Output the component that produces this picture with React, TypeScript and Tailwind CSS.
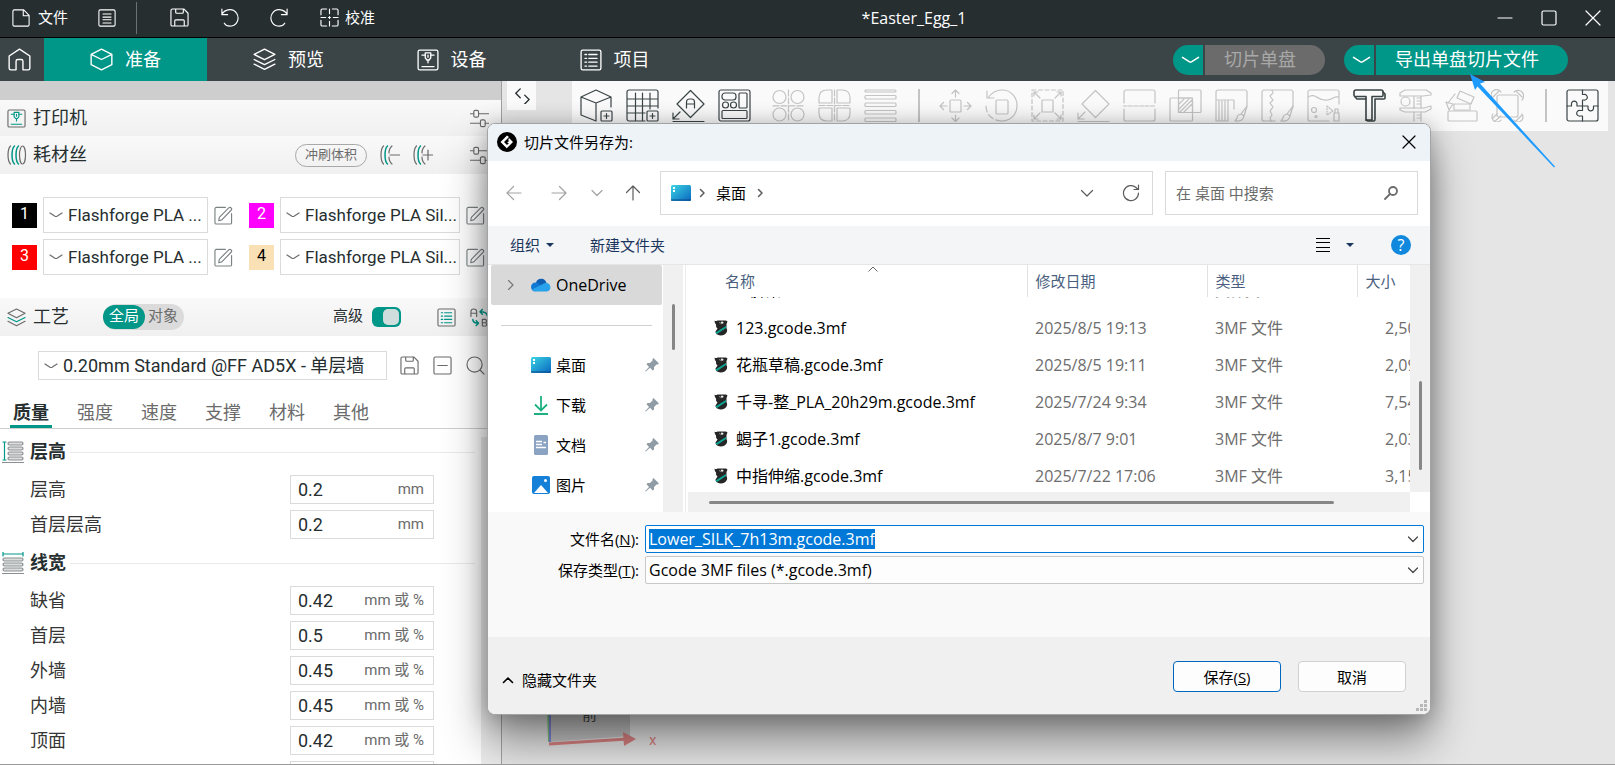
import { useEffect, useRef, useState, type ReactNode } from 'react';

type IconProps = { children: ReactNode; size?: number; box?: number; className?: string };

function Icon({ children, size = 19, box = 20, className = '' }: IconProps) {
  return (
    <svg
      width={size}
      height={size}
      viewBox={`0 0 ${box} ${box}`}
      fill="none"
      stroke="currentColor"
      strokeWidth={1.2}
      strokeLinecap="round"
      strokeLinejoin="round"
      className={`shrink-0 ${className}`}
      aria-hidden="true"
    >
      {children}
    </svg>
  );
}

const DownMark = ({ className = '' }: { className?: string }) => (
  <svg width="14" height="6" viewBox="0 0 14 6" fill="none" stroke="currentColor" strokeWidth="1.2" strokeLinecap="round" className={`shrink-0 ${className}`} aria-hidden="true">
    <path d="M1 1l5 3.2q1 .6 2 0l5-3.2" />
  </svg>
);

const SaveIcon = ({ className = '' }: { className?: string }) => (
  <Icon className={className}>
    <path d="M2.500 1h12L19 5.500V17.500a1.500 1.500 0 0 1-1.500 1.500h-15A1.500 1.500 0 0 1 1 17.500v-15A1.500 1.500 0 0 1 2.500 1zM6 1v3.500a1 1 0 0 0 1 1h6a1 1 0 0 0 1-1V1M5 19v-5.500a1 1 0 0 1 1-1h8a1 1 0 0 1 1 1V19" />
  </Icon>
);

const PrinterIcon = ({ size, accent = '' }: { size?: number; accent?: string }) => (
  <Icon size={size}>
    <rect x="1" y="1" width="18" height="18" rx="1.5" />
    <g className={accent}>
      <path d="M4.500 5.500h3M12.500 5.500h3M4.500 16h11" />
      <path d="M7.500 3.500h5v4.500l-1.500 2h-2l-1.500-2zM10 5.500v2M10 10v2.500" />
    </g>
  </Icon>
);

const LayersIcon = ({ size, accent = '' }: { size?: number; accent?: string }) => (
  <Icon size={size}>
    <path d="M10 1l9 4.600-9 4.600-9-4.600z" />
    <path className={accent} d="M1 10l9 4.500 9-4.500" />
    <path d="M1 14l9 4.600 9-4.600" />
  </Icon>
);

const SlidersIcon = () => (
  <Icon className="text-[#6b6b6b]">
    <path d="M0 5h4M9 5h11M0 15h11M16 15h4" />
    <rect x="4" y="1.500" width="5" height="7" rx="1.500" />
    <rect x="11" y="11.500" width="5" height="7" rx="1.500" />
  </Icon>
);

const EditIcon = () => (
  <Icon className="text-[#7b8283]">
    <path d="M12 1.500H2.500A1.500 1.500 0 0 0 1 3v14.500A1.500 1.500 0 0 0 2.500 19H17a1.500 1.500 0 0 0 1.500-1.500V8" />
    <path d="M5 15.500l.6-3.600L15.500 2a1.700 1.700 0 0 1 2.500 2.500L8.200 14.600z" />
  </Icon>
);

const SpoolIcon = ({ sign }: { sign?: 'minus' | 'plus' }) => (
  <Icon size={20} className="text-[#6b6b6b]">
    <path d="M3.500 1C.2 4 .2 16 3.500 19" />
    <path className="text-[#009688]" stroke="currentColor" strokeWidth="1.500" d="M7.500 1C4.200 4 4.200 16 7.500 19" />
    {sign ? (
      <>
        <path d="M12 1C9.500 3 9 6 9 8M9 12c0 3 1 5.500 3 7" />
        <path d={sign === 'plus' ? 'M10 10h10M15 5v10' : 'M10 10h10'} />
      </>
    ) : (
      <>
        <path className="text-[#009688]" stroke="currentColor" strokeWidth="1.500" d="M11.500 1C8.200 4 8.200 16 11.500 19" />
        <ellipse cx="15.500" cy="10" rx="3" ry="9" />
      </>
    )}
  </Icon>
);

const ListIcon = ({ size, accent = '' }: { size?: number; accent?: string }) => (
  <Icon size={size}>
    <rect x="1" y="1" width="18" height="18" rx="1.500" />
    <path className={accent} d="M4.500 5h1.500M8 5h7.500M4.500 8.500h1.500M8 8.500h7.500M4.500 12h1.500M8 12h7.500M4.500 15.500h1.500M8 15.500h7.500" />
  </Icon>
);

const mainTabs = [
  { name: '准备', icon: <Icon size={23}><path d="M10 1l9 4.500v9L10 19l-9-4.500v-9zM1 5.500l9 4.500 9-4.500" /></Icon> },
  { name: '预览', icon: <LayersIcon size={23} /> },
  { name: '设备', icon: <PrinterIcon size={22} /> },
  { name: '项目', icon: <ListIcon size={22} /> },
];

const plateTools = [
  { label: '添加模型', art: <><path d="M31 18V8L16 1 1 8v18l15 6V14M1 8l15 6 15-6" /><rect x="21" y="22" width="11" height="10" rx="1" /><path d="M26.500 24.500v5M24 27h5" /></> },
  { label: '添加盘', art: <><path d="M19 32H3a2 2 0 0 1-2-2V3a2 2 0 0 1 2-2h27a2 2 0 0 1 2 2v16M1 10h31M1 17h31M1 24h18M9.500 4v28M16.500 4v28M24 4v16" /><rect x="21" y="22" width="11" height="10" rx="1" /><path d="M26.500 24.500v5M24 27h5" /></> },
  { label: '自动朝向', art: <><path d="M18.500 1.500L32 15 18.500 28.500 5 15z" /><path d="M14.500 19v-6q0-3 3-3h2q3 0 3 3v6M14.500 15h8M8 23l-7 7M1 24v6h6M1 32.500h31" /></> },
  { label: '自动摆放', art: <><rect x="1" y="1" width="31" height="31" rx="2" /><rect x="4" y="4" width="14" height="7" rx="3" /><rect x="21" y="4" width="8" height="15" rx="1" /><circle cx="7.500" cy="16" r="3" /><circle cx="15.500" cy="16" r="3" /><rect x="4" y="21.500" width="25" height="8" rx="1" /></> },
];

const splitTools = [
  { label: '拆分为对象', art: <><circle cx="7.500" cy="8" r="6.500" /><circle cx="25.500" cy="8" r="6.500" /><circle cx="7.500" cy="25.500" r="6.500" /><circle cx="25.500" cy="25.500" r="6.500" /><path strokeDasharray="6 2" d="M1 16.800h31M16.500 1v31" /></> },
  { label: '拆分为零件', art: <><path d="M14 1H9Q1 1 1 9v5h13zM19 1h5q8 0 8 8v5H19zM14 32H9q-8 0-8-8v-5h13zM19 32h5q8 0 8-8v-5H19z" /><path strokeDasharray="6 2" d="M1 16.500h31M16.500 1v31" /></> },
  { label: '可变层高', art: <>{[1, 6.5, 14, 21.5, 29].map((y, i) => <rect key={y} x="1" y={y} width="31" height={i === 0 ? 2 : 3.5} rx="1" />)}</> },
];

const gizmoTools = [
  { label: '移动', art: <><rect x="11" y="11" width="11" height="12" rx="1" /><path d="M8 17H1M4.500 13.500L1 17l3.500 3.500M25 17h7M28.500 13.500L32 17l-3.500 3.500M16.500 8V1M13 4.500L16.500 1 20 4.500M16.500 26v6M13 29l3.500 3.500L20 29" /></> },
  { label: '旋转', art: <><rect x="11" y="11" width="12" height="14" rx="1" /><path d="M3 9C7 3 13 1 17 1c9 0 15 7 15 15.500S26 32 17 32M2 2v7h7" /><path strokeDasharray="6 3" d="M1 17c0 9 7 15 16 15" /></> },
  { label: '缩放', art: <><rect x="11" y="11" width="11" height="12" /><path strokeDasharray="4 2.500" d="M1 1h31v31H1z" /><path d="M3 3l6 6M30 3l-6 6M3 30l6-6M30 30l-6-6M3 7V3h4M26 3h4v4M3 26v4h4M26 30h4v-4" /></> },
  { label: '选择底面', art: <><path d="M18.500 1.500L32 15 18.500 28.500 5 15zM8 23l-7 7M1 24v6h6M1 32.500h31" /></> },
  { label: '切割', art: <><path d="M1 14V3a2 2 0 0 1 2-2h27a2 2 0 0 1 2 2v11M1 20v10a2 2 0 0 0 2 2h27a2 2 0 0 0 2-2V20" /><path strokeDasharray="4 1.500" d="M0 17h33" /></> },
  { label: '网格布尔', art: <><rect x="9.500" y="1" width="22.500" height="22.500" rx="1" /><rect x="1" y="9" width="22.500" height="23" rx="1" /><path d="M9.500 9h14v14.500h-14zM10 15l5-5M10 20l10-10M11 23l12-12M15 23l8-8" /></> },
  { label: '绘制支撑', art: <><path d="M32 18V3a2 2 0 0 0-2-2H3a2 2 0 0 0-2 2v8h18v9M1 11v21h12V11M4 12v20M7 12v20M10 12v20M32 17l-6 8q2 1 3 2zM26 25q-4 1-4 4l-2 3q8 1 9-5" /></> },
  { label: '涂抹接缝', art: <><path d="M32 18V3a2 2 0 0 0-2-2H3a2 2 0 0 0-2 2v27a2 2 0 0 0 2 2h11" /><path strokeDasharray="2 1" d="M11 1l1 3-3 3 3 4-3 3 3 4-3 4 2 4-2 3 1 3" /><path d="M32 17l-6 8q2 1 3 2zM26 25q-4 1-4 4l-2 3q8 1 9-5" /></> },
  { label: '上色', art: <><path d="M32 15V3a2 2 0 0 0-2-2H3a2 2 0 0 0-2 2v27a2 2 0 0 0 2 2h19M1 8c8-5 10 5 20 3 5-1 6-4 11-3" /><circle cx="7" cy="21" r="2.500" /><circle cx="9" cy="27.500" r="1" /><path d="M27 32v-8h5v8zM28 24v-4h3v4" /><path strokeDasharray="1 1.500" d="M20 17v9l6-4z" /></> },
  { label: '文字浮雕', dark: true, art: <><path strokeWidth="1.600" d="M3 1h25q2 0 2 2v3.500q0 1-1 1H19V31h-6V7.500H3q-2 0-2-1V3q0-2 2-2z" /><path strokeWidth="1.600" d="M30 3l2 2v4q0 1-1 1h-9v20q0 2-1 2h-6l-2-1M2 8l2 2h9" /></> },
  { label: '测量', art: <><path d="M1 4l5-3h21l5 3v2l-8 1H1zM1 19h24l7-2v3l-6 3H6l-5-2z" /><circle cx="6.500" cy="12.500" r="4.500" /><path d="M15 7v12M22 7v12M15 23v9M22 23v9M18 9h4M18 12h4M18 15h4M18 26h4M18 29h4" /></> },
  { label: '组装', art: <><rect x="3" y="22" width="29" height="10" rx="1" /><path strokeDasharray="2 1" d="M9 15h16v6H9z" /><path d="M15 2l14 6-3 7-14-6zM10 5L3 14M1 13l7 2-4 6z" /></> },
  { label: '耳状裙边', art: <><rect x="6" y="6" width="21" height="22" rx="2" /><path d="M1 9a5 5 0 1 1 9-6M23 3a5 5 0 1 1 8 8M2 25a5 5 0 1 0 8 6M31 25a5 5 0 1 1-8 6M2 8l6-6M25 2l6 6M2 29l4-4M4 32l6-5M25 32l6-6" /></> },
];

function ToolButton({ label, art, dark }: { label: string; art: ReactNode; dark?: boolean }) {
  return (
    <button aria-label={label} className={dark ? 'text-[#3b4446]' : 'text-[#c4c4c4]'}>
      <Icon size={33} box={33}>{art}</Icon>
    </button>
  );
}

const filaments = [
  { id: 1, name: 'Flashforge PLA ...', swatch: 'bg-black text-white' },
  { id: 2, name: 'Flashforge PLA Sil...', swatch: 'bg-[#ff00ff] text-white' },
  { id: 3, name: 'Flashforge PLA ...', swatch: 'bg-[#ff0000] text-white' },
  { id: 4, name: 'Flashforge PLA Sil...', swatch: 'bg-[#fae0b5] text-black' },
];

const settingTabs = ['质量', '强度', '速度', '支撑', '材料', '其他'];

const sections = [
  {
    title: '层高',
    art: <><path className="text-[#009688]" stroke="currentColor" d="M1 1h3M1 19h3M2.500 1v18" /><path d="M0 21.500h22" /><g className="fill-[#dcdcdc]"><rect x="6" y="1" width="15" height="3" rx="1.500" /><rect x="6" y="6" width="15" height="3" rx="1.500" /><rect x="6" y="11" width="15" height="3" rx="1.500" /><rect x="6" y="16" width="15" height="3" rx="1.500" /></g></>,
    rows: [
      { label: '层高', value: '0.2', unit: 'mm' },
      { label: '首层层高', value: '0.2', unit: 'mm' },
    ],
  },
  {
    title: '线宽',
    art: <><path className="text-[#009688]" stroke="currentColor" d="M1 0v4M21 0v4M1 2h20" /><path d="M0 21.500h22" /><g className="fill-[#dcdcdc]"><rect x="1" y="6" width="20" height="3" rx="1.500" /><rect x="1" y="11" width="20" height="3" rx="1.500" /><rect x="1" y="16" width="20" height="3" rx="1.500" /></g></>,
    rows: [
      { label: '缺省', value: '0.42', unit: 'mm 或 %' },
      { label: '首层', value: '0.5', unit: 'mm 或 %' },
      { label: '外墙', value: '0.45', unit: 'mm 或 %' },
      { label: '内墙', value: '0.45', unit: 'mm 或 %' },
      { label: '顶面', value: '0.42', unit: 'mm 或 %' },
      { label: '', value: '', unit: '' },
    ],
  },
];

const files = [
  { name: '123.gcode.3mf', date: '2025/8/5 19:13', size: '2,506 KB' },
  { name: '花瓶草稿.gcode.3mf', date: '2025/8/5 19:11', size: '2,095 KB' },
  { name: '千寻-整_PLA_20h29m.gcode.3mf', date: '2025/7/24 9:34', size: '7,544 KB' },
  { name: '蝎子1.gcode.3mf', date: '2025/8/7 9:01', size: '2,032 KB' },
  { name: '中指伸缩.gcode.3mf', date: '2025/7/22 17:06', size: '3,153 KB' },
];

function TitleBar() {
  return (
    <header className="flex h-[38px] shrink-0 items-center border-b border-black bg-[#262e30] pb-0.5 text-[15px] text-white">
      <button className="flex items-center gap-2 pl-3">
        <Icon size={18}><path d="M3 1h10l6 6v10.500a1.500 1.500 0 0 1-1.500 1.500h-15A1.500 1.500 0 0 1 1 17.500V2.500A1.500 1.500 0 0 1 2.500 1zM12.500 1v6.500H19" /></Icon>
        文件
      </button>
      <button aria-label="菜单" className="ml-[30px]">
        <Icon size={18}><rect x="1" y="1" width="18" height="18" rx="1.500" /><path d="M5.500 5.500h9M5.500 9h9M5.500 12h9M5.500 15.500h9" /></Icon>
      </button>
      <span className="mx-5 h-8 w-px bg-[#6c7273]" />
      <div className="flex items-center gap-[31px] pl-[13px]">
        <button aria-label="保存"><SaveIcon /></button>
        <button aria-label="撤销"><Icon><path d="M2 1v6h6M2 6.500C6 .5 14 0 17.500 5.500S18 18 12 19c-3 .4-6-.6-7.500-3" /></Icon></button>
        <button aria-label="重做"><Icon><path d="M18 1v6h-6M18 6.500C14 .5 6 0 2.500 5.500S2 18 8 19c3 .4 6-.6 7.500-3" /></Icon></button>
        <button className="flex items-center gap-1.5">
          <Icon><path d="M1 7V2.500A1.500 1.500 0 0 1 2.500 1H7M13 1h4.500A1.500 1.500 0 0 1 19 2.500V7M19 13v4.500a1.500 1.500 0 0 1-1.500 1.500H13M7 19H2.500A1.500 1.500 0 0 1 1 17.500V13M10 1v5M10 14v5M1 10h5M14 10h5M9 10h2M10 9v2" /></Icon>
          校准
        </button>
      </div>
      <h1 className="flex-1 pr-11 text-center font-['Open_Sans',sans-serif] text-base leading-5">*Easter_Egg_1</h1>
      <div className="flex items-center gap-7 pr-3.5">
        <button aria-label="最小化"><Icon size={16} box={16}><path d="M1 8h14" /></Icon></button>
        <button aria-label="最大化"><Icon size={16} box={16}><rect x="1" y="1" width="14" height="14" rx="1.500" /></Icon></button>
        <button aria-label="关闭"><Icon size={16} box={16}><path d="M1 1l14 14M15 1L1 15" /></Icon></button>
      </div>
    </header>
  );
}

function MainNav() {
  return (
    <nav className="flex h-[43px] shrink-0 items-center bg-[#3b4446] text-lg text-white">
      <button aria-label="主页" className="flex w-11 justify-center pr-1.5">
        <Icon size={23}><path d="M1 7l9-6 9 6v10.500a1.500 1.500 0 0 1-1.500 1.500H13v-7.500a1.500 1.500 0 0 0-1.500-1.500h-3A1.500 1.500 0 0 0 7 11.500V19H2.500A1.500 1.500 0 0 1 1 17.500z" /></Icon>
      </button>
      {mainTabs.map((tab, i) => (
        <button key={tab.name} className={`flex h-full w-[163px] items-center justify-center gap-3 ${i === 0 ? 'bg-[#009688]' : ''}`}>
          {tab.icon}
          {tab.name}
        </button>
      ))}
      <div className="ml-auto flex gap-[19px] pr-[47px]">
        <div className="flex gap-0.5">
          <button aria-label="切片选项" className="flex h-[30px] w-[30px] items-center justify-center rounded-l-full bg-[#009688] pl-1">
            <DownMark className="h-[8px] w-[19px]" />
          </button>
          <button className="h-[30px] w-[120px] rounded-r-full bg-[#6b6b6b] pr-2.5 text-[#a8a8a8]">切片单盘</button>
        </div>
        <div className="flex gap-0.5">
          <button aria-label="导出选项" className="flex h-[30px] w-[30px] items-center justify-center rounded-l-full bg-[#009688] pl-1">
            <DownMark className="h-[8px] w-[19px]" />
          </button>
          <button className="h-[30px] w-[192px] rounded-r-full bg-[#009688] pr-2.5">导出单盘切片文件</button>
        </div>
      </div>
    </nav>
  );
}

function FilamentSlot({ id, name, swatch }: { id: number; name: string; swatch: string }) {
  return (
    <div className="flex items-center gap-1.5">
      <label htmlFor={`filament-${id}`} className={`flex size-[25px] items-center justify-center pb-0.5 text-base ${swatch}`}>{id}</label>
      <div className="relative min-w-0 flex-1">
        <DownMark className="pointer-events-none absolute top-[15px] left-1.5 text-[#6b6b6b]" />
        <select id={`filament-${id}`} className="block h-9 w-full appearance-none border border-[#dbdbdb] bg-white pl-6 text-[17px] text-[#262e30]">
          <option>{name}</option>
        </select>
      </div>
      <button aria-label={`编辑耗材丝 ${id}`}><EditIcon /></button>
    </div>
  );
}

function Sidebar() {
  const [tab, setTab] = useState('质量');
  const bar = 'flex shrink-0 items-center bg-linear-to-b from-[#f9f9f9] to-[#f0f0f0] pr-3 pl-[7px]';

  return (
    <aside className="flex w-[502px] shrink-0 flex-col overflow-hidden border-r border-[#a0a0a0] bg-white text-lg text-[#262e30]">
      <div className="h-[19px] shrink-0 bg-[#cecece]" />
      <div className={`${bar} h-9`}>
        <span className="text-[#6b6b6b]"><PrinterIcon accent="stroke-[#009688]" /></span>
        <h2 className="ml-[7px] flex-1">打印机</h2>
        <button aria-label="打印机设置"><SlidersIcon /></button>
      </div>
      <div className={`${bar} h-[38px]`}>
        <SpoolIcon />
        <h2 className="ml-1.5 flex-1">耗材丝</h2>
        <button className="h-[23px] rounded-full border border-[#a8a8a8] px-[9px] text-[13px] leading-5 text-[#6b6b6b]">冲刷体积</button>
        <button aria-label="删除耗材丝" className="ml-[13px]"><SpoolIcon sign="minus" /></button>
        <button aria-label="添加耗材丝" className="mr-[37px] ml-[13px]"><SpoolIcon sign="plus" /></button>
        <button aria-label="耗材丝设置"><SlidersIcon /></button>
      </div>
      <div className="grid shrink-0 grid-cols-[221px_1fr] gap-x-4 gap-y-1.5 pt-[23px] pr-4 pb-[23px] pl-3">
        {filaments.map((f) => <FilamentSlot key={f.id} {...f} />)}
      </div>
      <div className={`${bar} h-[38px]`}>
        <span className="text-[#6b6b6b]"><LayersIcon accent="stroke-[#009688]" /></span>
        <h2 className="ml-[7px] w-[70px]">工艺</h2>
        <div className="flex h-[26px] items-center rounded-full bg-[#dbdbdb] text-[15px] text-[#6b6b6b]">
          <label className="flex h-6 w-[42px] items-center justify-center rounded-full bg-[#009688] text-white">
            <input type="radio" name="scope" defaultChecked className="sr-only" />全局
          </label>
          <label className="w-[39px] pl-[3px]">
            <input type="radio" name="scope" className="sr-only" />对象
          </label>
        </div>
        <label className="mr-9 ml-auto flex items-center gap-[9px] text-[15px]">
          高级
          <input type="checkbox" defaultChecked className="peer sr-only" />
          <span className="flex h-5 w-[29px] justify-end rounded-md bg-[#009688] p-0.5">
            <span className="h-4 w-4 rounded-[5px] bg-[#cfdedc]" />
          </span>
        </label>
        <button aria-label="参数列表" className="mr-3.5 text-[#6b6b6b]"><ListIcon accent="stroke-[#009688]" /></button>
        <button aria-label="比较预设" className="text-[#6b6b6b]">
          <Icon>
            <path d="M1 9V4q0-3 3-3t3 3v5M1 5.500h6M13 12v7h3.500a2 2 0 0 0 0-3.500H13h3a1.800 1.800 0 0 0 0-3.500z" />
            <path className="stroke-[#009688]" strokeWidth="1.600" d="M18 8c0-3-3-4-7-4M13 1.500L10.500 4l2.500 2.500M3 12c0 3 2 4 6 4M6.500 13.500L9 16l-2.500 2.500" />
          </Icon>
        </button>
      </div>

      <div className="flex shrink-0 items-center pt-[15px] pr-4 pl-[38px] text-[#6b6b6b]">
        <div className="relative mr-[13px] flex-1">
          <DownMark className="pointer-events-none absolute top-[12px] left-1.5" />
          <select aria-label="工艺预设" className="block h-[29px] w-full appearance-none border border-[#dbdbdb] bg-white pl-6 text-lg leading-6 text-[#262e30]">
            <option>0.20mm Standard @FF AD5X - 单层墙</option>
          </select>
        </div>
        <div className="flex items-center gap-3.5">
          <button aria-label="保存预设"><SaveIcon /></button>
          <button aria-label="删除预设"><Icon><rect x="1" y="1" width="18" height="18" rx="1.500" /><path d="M5 10h10" /></Icon></button>
          <button aria-label="搜索参数"><Icon><circle cx="9" cy="9" r="8" /><path d="M15 15l4 4" /></Icon></button>
        </div>
      </div>

      <div className="flex h-[49px] shrink-0 items-end gap-[22px] border-b border-[#cecece] pl-2.5">
        {settingTabs.map((name) => (
          <button
            key={name}
            onClick={() => setTab(name)}
            className={`h-[34px] w-[42px] border-b-[3px] pt-1.5 leading-none ${name === tab ? 'border-[#009688] font-bold' : 'border-transparent text-[#6b6b6b]'}`}
          >
            {name}
          </button>
        ))}
      </div>

      <div className="flex min-h-0 flex-1">
        <div className="min-w-0 flex-1 overflow-hidden pt-0.5 pl-0.5">
          {sections.map((s) => (
            <section key={s.title} className="pt-1">
              <div className="mb-[3px] flex h-[34px] items-center">
                <Icon size={22} box={22} className="text-[#8a8f90]">{s.art}</Icon>
                <h3 className="ml-1.5 font-bold">{s.title}</h3>
                <span className="mr-1.5 ml-1 h-px flex-1 bg-[#eaeaea]" />
              </div>
              {s.rows.map((r) => (
                <div key={r.label} className="flex h-[35px] items-center pl-7">
                  <label htmlFor={s.title + r.label} className="w-[260px] text-[#363636]">{r.label}</label>
                  <div className="flex h-[29px] w-36 items-center border border-[#dbdbdb] pr-[9px] pl-[7px]">
                    <input id={s.title + r.label} defaultValue={r.value} className="w-16 min-w-0 outline-none" />
                    <span className="ml-auto text-[15px] whitespace-nowrap text-[#6b6b6b]">{r.unit}</span>
                  </div>
                </div>
              ))}
            </section>
          ))}
        </div>
        <div className="mt-2 w-5 shrink-0 bg-[#ececec]" />
      </div>
    </aside>
  );
}

function Viewport() {
  return (
    <main className="relative flex min-w-0 flex-1 items-start bg-[#e5e5e5] pl-[5px]">
      <button aria-label="折叠侧栏" className="flex h-[29px] w-[29px] shrink-0 items-center justify-center bg-[#fafafa] text-[#262e30]">
        <Icon size={16} box={18}><path strokeWidth="1.500" d="M7 1L2 6l5 5M12 8l5 5-5 5" /></Icon>
      </button>
      <div className="mr-[7px] ml-9 flex h-[50px] flex-1 items-start gap-[21px] overflow-hidden bg-[#fafafa] pt-2 pr-[9px] pl-2">
        <div className="flex gap-[13px]">{plateTools.map((t) => <ToolButton key={t.label} dark {...t} />)}</div>
        <div className="flex gap-[13px]">{splitTools.map((t) => <ToolButton key={t.label} {...t} />)}</div>
        <span className="h-[33px] w-0.5 bg-[#c4c4c4]" />
        <div className="-ml-0.5 flex gap-[13px]">{gizmoTools.map((t) => <ToolButton key={t.label} {...t} />)}</div>
        <span className="ml-auto h-[33px] w-0.5 bg-[#c4c4c4]" />
        <div className="-ml-0.5">
          <ToolButton
            label="装配体视图"
            dark
            art={<><rect x="1" y="1" width="31" height="31" rx="2" /><path d="M16.500 1v4.500h1.500a2.800 2.800 0 1 1 0 5.500h-1.500v6M16.500 17v4.500H14a2.800 2.800 0 1 0 0 5.500h2.500v5M1 17h4.500v-1.500a2.800 2.800 0 1 1 5.500 0V17h11v1.500a2.800 2.800 0 1 0 5.500 0V17H32" /></>}
          />
        </div>
      </div>
      {/* orientation cube */}
      <svg className="absolute bottom-0 left-[38px] text-[15px]" width="130" height="90" viewBox="0 0 130 90" aria-hidden="true">
        <path d="M10 0h80v62l-80 6z" fill="#c4c4c4" />
        <path d="M7 0l2 68" stroke="#7cc47c" strokeWidth="2" />
        <path d="M10 0v68" stroke="#7f86d8" strokeWidth="2" />
        <path d="M9 70l78-5" stroke="#d98080" strokeWidth="3" />
        <path d="M83 58l13 7-12 7z" fill="#d98080" />
        <text x="42" y="46" fill="#444">前</text>
        <text x="109" y="71" fill="#d98080">x</text>
      </svg>
    </main>
  );
}

const DesktopIcon = () => (
  <svg width="20" height="16" viewBox="0 0 20 16" className="shrink-0" aria-hidden="true">
    <defs><linearGradient id="desk" x1="0" y1="0" x2="1" y2="1"><stop stopColor="#3bd5e3" /><stop offset="1" stopColor="#0a66c0" /></linearGradient></defs>
    <rect width="20" height="16" rx="1.500" fill="url(#desk)" />
    <path d="M2 2h2v2H2zM2 5h2v2H2z" fill="#fff" />
    <path d="M0 15h20" stroke="#0b4a86" />
  </svg>
);

const places = [
  { name: '桌面', icon: <DesktopIcon /> },
  { name: '下载', icon: <svg width="20" height="20" viewBox="0 0 20 20" fill="none" stroke="#1db182" strokeWidth="1.800" aria-hidden="true"><path d="M10 1v14M4 9.500l6 6 6-6M3 19h14" /></svg> },
  { name: '文档', icon: <svg width="20" height="20" viewBox="0 0 20 20" aria-hidden="true"><rect x="3" y="0" width="14" height="20" rx="1.500" fill="#8aa3c2" /><path d="M5 6.500h6M5 9.500h6M5 12.500h10M12.500 7.500H15" stroke="#fff" strokeWidth="1.500" /></svg> },
  { name: '图片', icon: <svg width="20" height="20" viewBox="0 0 20 20" aria-hidden="true"><rect x="1" y="1" width="18" height="18" rx="2" fill="#1580d8" /><path d="M3 18l7-8 7 8z" fill="#fff" /><circle cx="14.500" cy="5.500" r="1.500" fill="#fff" /></svg> },
];

const PinIcon = () => (
  <svg width="14" height="14" viewBox="0 0 14 14" className="ml-auto" fill="#8f9ba5" aria-hidden="true">
    <path d="M8.500 0L14 5.500l-1.500 1-1 0-2.500 2.500v2.500l-1.200 1L5 9.800.8 13.500 0 13.200 4 9 1.500 6.200l1-1.200H5l2.600-2.600V1z" />
  </svg>
);

const OrcaIcon = () => (
  <svg width="18" height="18" viewBox="0 0 18 18" className="shrink-0" aria-hidden="true">
    <path d="M1.500 1.500q1 1 3 0h8.500l1.500 1-1 2.500v4q1 1.500.5 3.500-1.500 4-6.500 4-5-.5-5-4l2-3Q2.500 8 3 5.500 1.500 4 1.500 1.500z" fill="#262626" />
    <path d="M2.500 13.500L13 7v2L4 15z" fill="#0aa796" />
    <path d="M6 3.500q3 2.500 5 0" stroke="#8a8a8a" fill="none" />
    <circle cx="9" cy="3.500" r="1" fill="#fff" />
  </svg>
);

const CaretDown = () => <svg width="8" height="4" viewBox="0 0 8 4" fill="#1b365d" aria-hidden="true"><path d="M0 0h8L4 4z" /></svg>;

function FileTable() {
  const head = 'h-8 border-r border-[#e2e2e2] pl-2 text-left text-[15px] font-normal';
  const peek = 'flex h-3 flex-col justify-end overflow-hidden';
  return (
    <div className="relative min-w-0 flex-1 overflow-hidden">
      <svg width="10" height="6" viewBox="0 0 10 6" fill="none" stroke="#6b6b6b" className="absolute top-px left-[180px]" aria-hidden="true"><path d="M.5 5.500L5 1l4.500 4.500" /></svg>
      <table className="w-[819px] table-fixed border-collapse text-base leading-5 text-[#6d6d6d]">
        <colgroup>
          <col className="w-[339px]" />
          <col className="w-[180px]" />
          <col className="w-[150px]" />
          <col className="w-[150px]" />
        </colgroup>
        <thead className="text-[#4a5f80]">
          <tr>
            <th className="h-8 border-r border-[#e2e2e2] pl-[37px] text-left text-[15px] font-normal">名称</th>
            <th className={head}>修改日期</th>
            <th className={head}>类型</th>
            <th className={head}>大小</th>
          </tr>
        </thead>
        <tbody>
          {/* row scrolled under the header */}
          <tr>
            <td className="p-0"><div className={`${peek} pl-12 text-[15px] text-black`}><span className="leading-[37px]">三脚架</span></div></td>
            <td className="p-0"><div className={`${peek} pl-2`}><span className="leading-[37px]">2025/8/5 19:02</span></div></td>
            <td className="p-0"><div className={`${peek} pl-2 text-[15px]`}><span className="leading-[37px]">文件夹</span></div></td>
            <td className="p-0" />
          </tr>
          {files.map((f) => (
            <tr key={f.name} className="h-[37px]">
              <td className="p-0 pl-[25px]">
                <span className="flex items-center gap-[5px] text-black"><OrcaIcon />{f.name}</span>
              </td>
              <td className="p-0 pl-2">{f.date}</td>
              <td className="p-0 pl-2">3MF 文件</td>
              <td className="p-0 pl-7 whitespace-nowrap">{f.size}</td>
            </tr>
          ))}
        </tbody>
      </table>
    </div>
  );
}

function SaveDialog() {
  const nameRef = useRef<HTMLInputElement>(null);

  useEffect(() => {
    nameRef.current?.focus();
    nameRef.current?.select();
  }, []);

  return (
    <div role="dialog" aria-labelledby="dialog-title" className="absolute top-[123px] left-[487px] flex w-[944px] flex-col overflow-hidden rounded-lg border border-[#a0a4a7] bg-white font-['Open_Sans','Noto_Sans_CJK_SC',sans-serif] text-[15px] leading-5 text-black shadow-[0_26px_44px_rgba(0,0,0,0.42),0_2px_22px_rgba(0,0,0,0.25)]">
      <div className="flex h-[37px] items-center bg-[#eef3f8] pr-3.5 pb-0.5 pl-[9px]">
        <svg width="20" height="20" viewBox="0 0 20 20" aria-hidden="true">
          <circle cx="10" cy="10" r="10" />
          <path d="M10 3.500L3.500 10l6.500 6.500V13L7 10l5-5zM12 6l4 4-6 6v-3l2-2h-2l2.500-2.500H11z" fill="#fff" />
        </svg>
        <h2 id="dialog-title" className="ml-[7px] flex-1">切片文件另存为:</h2>
        <button aria-label="关闭"><Icon size={14} box={14}><path d="M1 1l12 12M13 1L1 13" /></Icon></button>
      </div>

      <div className="flex items-center pt-[10px] pr-3 pb-[11px] pl-[18px]">
        <div className="flex w-[154px] items-center text-[#a3a3a3]">
          <button aria-label="后退"><Icon size={16} box={16}><path d="M15 8H1M7.500 1.500L1 8l6.500 6.500" /></Icon></button>
          <button aria-label="前进" className="ml-[29px]"><Icon size={16} box={16}><path d="M1 8h14M8.500 1.500L15 8l-6.500 6.500" /></Icon></button>
          <button aria-label="最近位置" className="ml-6"><Icon size={12} box={12}><path d="M1 3.500l5 5 5-5" /></Icon></button>
          <button aria-label="上一级" className="ml-[22px] text-[#5c5c5c]"><Icon size={16} box={16}><path d="M8 15V1M1.500 7.500L8 1l6.500 6.500" /></Icon></button>
        </div>
        <div className="flex h-11 flex-1 items-center border border-[#d9d9d9] pr-3 pl-2.5 text-[#5c5c5c]">
          <DesktopIcon />
          <Icon size={10} box={10} className="ml-1.5"><path strokeWidth="1.500" d="M3.500 1.500L7 5 3.500 8.500" /></Icon>
          <a href="#desktop" className="mx-[9px] text-black">桌面</a>
          <Icon size={10} box={10}><path strokeWidth="1.500" d="M3.500 1.500L7 5 3.500 8.500" /></Icon>
          <button aria-label="历史位置" className="mr-7 ml-auto"><Icon size={14} box={14}><path d="M1.500 4.500L7 10l5.500-5.500" /></Icon></button>
          <button aria-label="刷新"><Icon size={18} box={18}><path d="M16.500 9A7.500 7.500 0 1 1 14 3.500l2 2M16.500 1v4.500H12" /></Icon></button>
        </div>
        <label className="ml-3 flex h-11 w-[253px] items-center border border-[#d9d9d9] pr-[19px] pl-2.5 text-[#6b6b6b]">
          <input aria-label="搜索" placeholder="在 桌面 中搜索" className="w-full min-w-0 outline-none placeholder:text-[#6b6b6b]" />
          <Icon size={14} box={14}><circle cx="9" cy="5" r="4" strokeWidth="1.800" /><path strokeWidth="1.800" d="M6 8l-5 5" /></Icon>
        </label>
      </div>

      <div className="flex h-[39px] items-center border-b border-[#e6e6e6] bg-[#f4f5f7] pr-[19px] pl-[22px] text-[#1b365d]">
        <button className="flex items-center gap-1.5">组织<CaretDown /></button>
        <button className="ml-9">新建文件夹</button>
        <button aria-label="更改视图" className="ml-auto text-black"><svg width="14" height="14" viewBox="0 0 14 14" stroke="currentColor" aria-hidden="true"><path d="M0 .5h14M0 4.500h14M0 9.500h14M0 13.500h14" /></svg></button>
        <button aria-label="更多选项" className="mr-[37px] ml-4"><CaretDown /></button>
        <button aria-label="帮助" className="size-5 rounded-full bg-[#0f88dd] text-base leading-5 text-white">?</button>
      </div>

      <div className="flex h-[247px]">
        <div className="w-[175px] shrink-0 pr-px pl-[3px]">
          <a href="#onedrive" className="flex h-10 items-center rounded-xs bg-[#d9d9d9] pl-[15px] text-base">
            <Icon size={10} box={10} className="text-[#777]"><path d="M2.500 .5L7 5 2.500 9.500" /></Icon>
            <svg width="20" height="14" viewBox="0 0 20 14" className="mr-[5px] ml-[15px]" aria-hidden="true">
              <path d="M5 4.500A5.500 5.500 0 0 1 15.500 5L8 9z" fill="#0f5fb5" />
              <path d="M4.500 13.500a4.500 4.500 0 0 1 0-9q3 0 5 2.500L4 13z" fill="#1279d3" />
              <path d="M15 5a4.300 4.300 0 0 1 1 8.500H4.500q-2 0-3.500-2L12 6q1-1 3-1z" fill="#28a2ea" />
            </svg>
            OneDrive
          </a>
          <hr className="mx-2.5 mt-5 mb-[19px] border-[#d0d0d0]" />
          {places.map((p) => (
            <a key={p.name} href="#place" className="flex h-10 items-center gap-[5px] pr-[3px] pl-10">
              {p.icon}
              {p.name}
              <PinIcon />
            </a>
          ))}
        </div>
        <div className="flex w-5 shrink-0 justify-center bg-[#f0f0f0] pt-[39px]"><span className="h-[46px] w-[3px] rounded-full bg-[#868686]" /></div>
        <span className="mx-0.5 w-px shrink-0 bg-[#ececec]" />
        <div className="flex min-w-0 flex-1 flex-col">
          <div className="flex h-[227px]">
            <FileTable />
            <div className="flex w-5 shrink-0 justify-center bg-[#f0f0f0] pt-[116px]"><span className="h-[89px] w-[3px] rounded-full bg-[#868686]" /></div>
          </div>
          <div className="mr-5 flex h-5 items-center bg-[#f0f0f0] pl-[21px]"><span className="h-[3px] w-[625px] rounded-full bg-[#868686]" /></div>
        </div>
      </div>

      <div className="grid h-[125px] grid-cols-[151px_1fr] content-start items-center gap-x-1.5 gap-y-[3px] bg-[#f9f9f9] pt-[13px] pr-1.5">
        <label htmlFor="file-name" className="text-right">文件名(<u>N</u>):</label>
        <div className="flex h-7 items-center rounded-xs border border-[#0078d7] bg-white pr-1 pl-[3px]">
          <input id="file-name" ref={nameRef} defaultValue="Lower_SILK_7h13m.gcode.3mf" className="h-5 min-w-0 flex-1 text-base leading-5 outline-none selection:bg-[#0078d7] selection:text-white" />
          <Icon size={12} box={12} className="text-[#444]"><path d="M1.500 4L6 8.500 10.500 4" /></Icon>
        </div>
        <label htmlFor="file-type" className="text-right">保存类型(<u>T</u>):</label>
        <div className="relative">
          <select id="file-type" className="block h-7 w-full appearance-none rounded-xs border border-[#c8c8c8] bg-[#fdfdfd] pl-[3px] text-base leading-5">
            <option>Gcode 3MF files (*.gcode.3mf)</option>
          </select>
          <Icon size={12} box={12} className="pointer-events-none absolute top-2 right-[5px] text-[#444]"><path d="M1.500 4L6 8.500 10.500 4" /></Icon>
        </div>
      </div>

      <div className="relative flex h-[77px] items-start bg-[#f0f0f0] pr-6 pl-3.5">
        <button className="flex items-center gap-2 pt-[33px]">
          <Icon size={12} box={12}><path strokeWidth="1.600" d="M1.500 8.500L6 4l4.500 4.500" /></Icon>
          隐藏文件夹
        </button>
        <button className="mt-6 ml-auto h-[31px] w-[108px] rounded-sm border border-[#0067c0] bg-[#fdfdfd]">保存(<u>S</u>)</button>
        <button className="mt-6 ml-[17px] h-[31px] w-[108px] rounded-sm border border-[#d0d0d0] bg-[#fdfdfd]">取消</button>
        <svg width="12" height="12" viewBox="0 0 12 12" fill="#b8b8b8" className="absolute right-0.5 bottom-0.5" aria-hidden="true">
          <path d="M8 0h3v3H8zM4 4h3v3H4zM8 4h3v3H8zM0 8h3v3H0zM4 8h3v3H4zM8 8h3v3H8z" />
        </svg>
      </div>
    </div>
  );
}

export default function App() {
  return (
    <div className="relative flex h-screen flex-col overflow-hidden border-b border-[#9a9a9a] font-['Roboto','Noto_Sans_CJK_SC',sans-serif] leading-6">
      <TitleBar />
      <MainNav />
      <div className="relative flex min-h-0 flex-1">
        <Sidebar />
        <Viewport />
      </div>
      <SaveDialog />
      {/* pointer to the export button */}
      <svg className="pointer-events-none absolute top-[72px] right-[59px]" width="88" height="98" viewBox="0 0 88 98" fill="#1e9bff" aria-hidden="true">
        <path d="M2 2l15 8-5 1.500L87 94.500l-1 1L9.500 14.500 7 18z" />
      </svg>
    </div>
  );
}
